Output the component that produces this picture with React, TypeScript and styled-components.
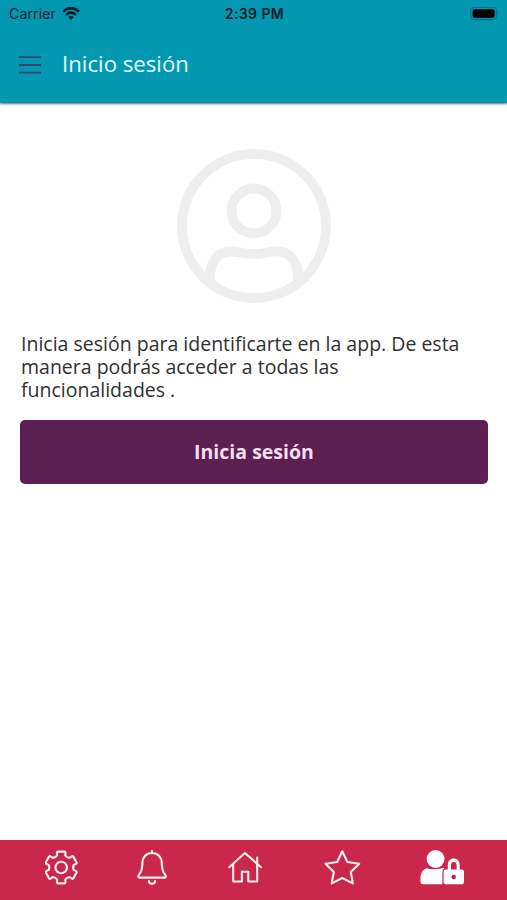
import React from "react";
import styled, { createGlobalStyle } from "styled-components";

const GlobalStyle = createGlobalStyle`
  * { box-sizing: border-box; }
  body { margin: 0; background: #fff; font-family: "Open Sans", "Noto Sans", sans-serif; }
`;

const Screen = styled.div`
  display: flex;
  flex-direction: column;
  height: 900px;
  width: 507px;
  overflow: hidden;
`;

const Header = styled.header`
  height: 103px;
  flex: none;
  background: #0398b1;
  box-shadow: 0 1px 2px rgba(0, 0, 0, 0.6);
`;

const StatusBar = styled.div`
  display: grid;
  grid-template-columns: 1fr auto 1fr;
  align-items: center;
  height: 27px;
  padding: 0 7px 0 9px;
  font-family: Inter, "Liberation Sans", sans-serif;
  font-size: 14px;
  color: #06222a;
`;

const Carrier = styled.div`
  display: flex;
  align-items: center;
  gap: 6px;
  letter-spacing: 0.15px;
`;

const Clock = styled.div`
  font-weight: 600;
  font-size: 14px;
  letter-spacing: 0.4px;
  color: #041b20;
`;

const Battery = styled.svg`
  justify-self: end;
  display: block;
`;

const TitleBar = styled.div`
  display: flex;
  align-items: center;
  gap: 21px;
  height: 76px;
  padding: 0 0 2px 19px;
`;

const MenuButton = styled.button`
  display: flex;
  padding: 2px 0 0;
  border: 0;
  background: none;
`;

const Title = styled.h1`
  margin: 0;
  font-size: 22.2px;
  font-weight: 400;
  line-height: 30px;
  color: #e2fbff;
`;

const Content = styled.main`
  display: flex;
  flex-direction: column;
  flex: 1;
  padding: 46px 19px 0 20px;
`;

const Avatar = styled.svg`
  display: block;
  align-self: center;
`;

const Message = styled.p`
  margin: 29px 0 19px;
  padding: 0 20px 0 1px;
  font-size: 19.5px;
  line-height: 23px;
  color: #303030;
`;

const LoginButton = styled.button`
  height: 63.5px;
  border: 0;
  border-radius: 5px;
  background: #5c1f52;
  color: #f3dff0;
  font-family: inherit;
  font-size: 19.5px;
  font-weight: 700;
`;

const TabBar = styled.nav`
  display: grid;
  grid-template-columns: 92px 91px 96px 96px 44px;
  flex: none;
  height: 60px;
  padding: 9px 0 0 45px;
  background: #c9274b;
`;

const TabIcon = styled.svg`
  display: block;
  height: 38px;
  fill: none;
  stroke: #ffeef1;
  stroke-width: 2.1;
  stroke-linejoin: round;
  stroke-linecap: round;
`;

const gearPath = (() => {
  const at = (radius: number, degrees: number) => {
    const a = (degrees * Math.PI) / 180;
    return `${(16.2 + radius * Math.cos(a)).toFixed(2)} ${(18.5 + radius * Math.sin(a)).toFixed(2)}`;
  };
  let d = "";
  for (let k = 0; k < 6; k++) {
    const mid = -90 + k * 60;
    d += `${k ? "L" : "M"}${at(12.6, mid - 19)} L${at(15.6, mid - 16)} Q${at(16.4, mid - 15)} ${at(16.2, mid - 11)} L${at(16.2, mid + 11)} Q${at(16.4, mid + 15)} ${at(15.6, mid + 16)} L${at(12.6, mid + 19)} Q${at(11.6, mid + 30)} ${at(12.6, mid + 41)} `;
  }
  return d + "Z";
})();

export default function App() {
  return (
    <>
      <GlobalStyle />
      <Screen>
        <Header>
          <StatusBar>
            <Carrier>
              Carrier
              <svg width="18" height="14" viewBox="0 0 18 14" fill="none" stroke="#041b20" strokeWidth="2.6">
                <path d="M1 4.6 Q9 -2.5 17 4.6" />
                <path d="M4 7.7 Q9 3.5 14 7.7" />
                <path d="M9 13 L6.2 10.1 Q9 7.9 11.8 10.1Z" fill="#041b20" stroke="none" />
              </svg>
            </Carrier>
            <Clock>2:39 PM</Clock>
            <Battery width="30" height="14" viewBox="0 0 30 14">
              <rect x="0.7" y="0.3" width="25.6" height="12.2" rx="3.4" fill="none" stroke="#087589" strokeWidth="1.3" />
              <rect x="2.6" y="2.2" width="22" height="8.6" rx="1.8" fill="#000" />
              <path d="M27.6 4.2 Q29.8 6.4 27.6 8.6Z" fill="#087589" />
            </Battery>
          </StatusBar>
          <TitleBar>
            <MenuButton aria-label="Menú">
              <svg width="22" height="18" viewBox="0 0 22 18" stroke="#384673" strokeWidth="1.8">
                <path d="M0 1.2H22M0 9H22M0 16.7H22" />
              </svg>
            </MenuButton>
            <Title>Inicio sesión</Title>
          </TitleBar>
        </Header>
        <Content>
          <Avatar width="154" height="154" viewBox="0 0 154 154" fill="none" stroke="#eeeeee" strokeWidth="9.8">
            <circle cx="77" cy="77" r="72" />
            <circle cx="77" cy="62" r="22.5" />
            <path d="M33 133 V128 C33 113 41 102.5 54 102.5 C63 102.5 67 105 77 105 C87 105 91 102.5 100 102.5 C113 102.5 121 113 121 128 V133" />
          </Avatar>
          <Message>
            Inicia sesión para identificarte en la app. De esta manera podrás acceder a todas las funcionalidades .
          </Message>
          <LoginButton>Inicia sesión</LoginButton>
        </Content>
        <TabBar>
          <TabIcon width="33" viewBox="0 0 33 38">
            <path d={gearPath} />
            <circle cx="16.2" cy="18.5" r="5.8" />
          </TabIcon>
          <TabIcon width="31" viewBox="0 0 31 38">
            <path d="M15 2V4 M15 4C8.8 4 5.4 8.5 5.4 14C5.4 21 4 23.5 1.8 26.2C.9 27.4 1.2 28.6 2.6 28.6H27.6C29 28.6 29.3 27.4 28.4 26.2C26.2 23.5 24.8 21 24.8 14C24.8 8.5 21.2 4 15 4Z" />
            <path d="M11.9 32.1C12.2 35.6 17.8 35.6 18.1 32.1" />
          </TabIcon>
          <TabIcon width="35" viewBox="0 0 35 38">
            <path d="M1.2 18.2L17 4L33 18.2" />
            <path d="M5.2 15.5V32.5H13.9V22.8H20.3V32.5H29.2V8.5" />
          </TabIcon>
          <TabIcon width="37" viewBox="0 0 37 38">
            <path d="M18.3 2.3L23.4 13L35.2 14.7L26.8 23L28.9 34.4L18.3 29L7.7 34.4L9.8 23L1.5 14.7L13.2 13Z" />
          </TabIcon>
          <TabIcon width="44" viewBox="0 0 44 38">
            <g fill="#fff" stroke="none">
              <circle cx="15.6" cy="10" r="8.9" />
              <path d="M7 19.2C10 20.6 20 20.6 23.6 18.8L24.4 19.6Q22.4 20.8 22.4 23V35.3H3Q.5 35.3 .5 32.8V29C.5 23.6 3 20.4 7 19.2Z" />
              <path fillRule="evenodd" d="M25.6 20.6H27.8V16.3C27.8 12.2 30.3 9.6 33.8 9.6S39.7 12.2 39.7 16.3V20.6H41.8Q44 20.6 44 22.8V33.1Q44 35.3 41.8 35.3H25.8Q23.6 35.3 23.6 33.1V22.8Q23.6 20.6 25.6 20.6ZM31 20.6H36.6V16.3Q36.6 13.1 33.8 13.1T31 16.3Z" />
            </g>
            <circle cx="33.7" cy="28" r="2.2" fill="#b51f42" stroke="none" />
          </TabIcon>
        </TabBar>
      </Screen>
    </>
  );
}
